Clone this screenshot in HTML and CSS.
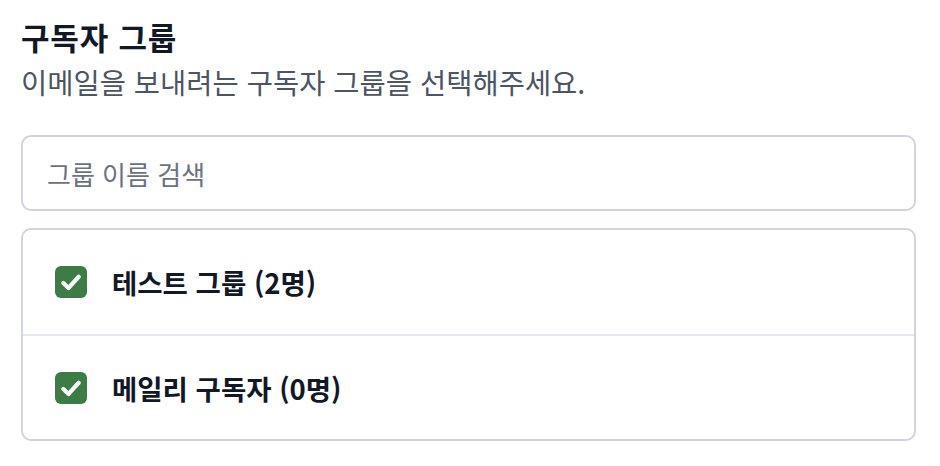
FILE: index.html
```html
<!DOCTYPE html>
<html lang="ko">
<head>
    <meta charset="UTF-8">
    <meta name="viewport" content="width=device-width, initial-scale=1.0">
    <title>구독자 그룹</title>
    <link rel="stylesheet" href="styles.css">
</head>
<body>

<div class="group-picker">
    <h2 class="title">구독자 그룹</h2>
    <p class="desc">이메일을 보내려는 구독자 그룹을 선택해주세요.</p>

    <input class="search" type="text" placeholder="그룹 이름 검색">

    <ul class="group-list">
        <li class="group-item">
            <span class="check">
                <svg viewBox="0 0 16 16"><path d="M3.6 8.6 L6.6 11.4 L12.4 5" fill="none" stroke="#fff" stroke-width="2.4" stroke-linecap="round" stroke-linejoin="round"/></svg>
            </span>
            <span class="name">테스트 그룹 (2명)</span>
        </li>
        <li class="group-item">
            <span class="check">
                <svg viewBox="0 0 16 16"><path d="M3.6 8.6 L6.6 11.4 L12.4 5" fill="none" stroke="#fff" stroke-width="2.4" stroke-linecap="round" stroke-linejoin="round"/></svg>
            </span>
            <span class="name">메일리 구독자 (0명)</span>
        </li>
    </ul>
</div>

</body>
</html>
```

FILE: styles.css
```css
body { margin: 0; background: #fff; font-family: "Noto Sans CJK KR", "Noto Sans", sans-serif; color: #111827; }
.group-picker { width: 895px; margin-left: 21px; padding-top: 16px; }
.title { margin: 0; font-size: 31px; font-weight: 700; line-height: 42px; color: #111827; letter-spacing: 0.8px; }
.desc { margin: 4px 0 0; font-size: 28.5px; line-height: 40px; color: #4b5563; }
.search { display: block; box-sizing: border-box; width: 100%; height: 76px; margin-top: 33px; padding: 0 24px; border: 2px solid #d1d5db; border-radius: 10px; font-family: inherit; font-size: 26px; color: #111827; outline: none; }
.search::placeholder { color: #6b7280; }
.group-list { list-style: none; margin: 17px 0 0; padding: 0; border: 2px solid #d1d5db; border-radius: 10px; }
.group-item { display: flex; align-items: center; gap: 25px; height: 104px; padding-left: 32px; }
.group-item + .group-item { border-top: 2px solid #e5e7eb; height: 103px; }
.check { display: flex; align-items: center; justify-content: center; width: 32px; height: 32px; border-radius: 6px; background: #3d7c47; }
.check svg { width: 28px; height: 28px; }
.name { font-size: 27.5px; font-weight: 700; color: #111827; }
```
